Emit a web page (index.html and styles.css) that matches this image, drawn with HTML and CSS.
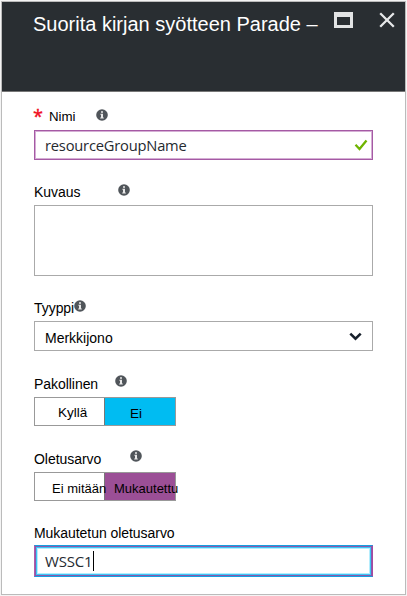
FILE: index.html
```html
<!DOCTYPE html>
<html lang="fi">
<head>
<meta charset="utf-8">
<title>Suorita kirjan syötteen Parade</title>
<link rel="stylesheet" href="styles.css">
</head>
<body>
<svg width="0" height="0" class="defs"><symbol id="info" viewBox="0 0 12 12"><circle cx="6" cy="6" r="5.8" fill="#50555a"/><path d="M5 2.2h2v1.6H5zM4.4 4.8H7v3.8h.8v1H4.2v-1H5V5.8h-.6z" fill="#e8e8e8"/></symbol></svg>
<main class="blade">
  <header class="head">
    <h1 class="title">Suorita kirjan syötteen Parade <span class="dash">–</span></h1>
    <svg class="win" viewBox="0 0 19 16"><path d="M0 0h19v16H0zM3 5v8h13V5z" fill="#e2e4e5" fill-rule="evenodd"/></svg>
    <svg class="close" viewBox="0 0 16 16"><path d="M1.2 1.2l13.6 13.6M14.8 1.2L1.2 14.8" stroke="#e6e8e9" stroke-width="2.3"/></svg>
  </header>
  <form class="form">
    <div class="field name">
      <div class="label"><span class="star">*</span><span class="text">Nimi</span><svg class="info"><use href="#info"/></svg></div>
      <div class="box valid"><span class="value">resourceGroupName</span><svg class="check" viewBox="0 0 14 12"><path d="M1.5 5.8l4 4.2L12.5 1.5" fill="none" stroke="#6fb400" stroke-width="2.3"/></svg></div>
    </div>
    <div class="field desc">
      <div class="label"><span class="text">Kuvaus</span><svg class="info"><use href="#info"/></svg></div>
      <div class="box area"></div>
    </div>
    <div class="field type">
      <div class="label"><span class="text">Tyyppi</span><svg class="info"><use href="#info"/></svg></div>
      <div class="box select"><span class="choice">Merkkijono</span><svg class="chev" viewBox="0 0 13 9"><path d="M1.3 1.6l5.2 5 5.2-5" fill="none" stroke="#17202b" stroke-width="2.6"/></svg></div>
    </div>
    <div class="field req">
      <div class="label"><span class="text">Pakollinen</span><svg class="info"><use href="#info"/></svg></div>
      <div class="toggle"><span class="opt">Kyllä</span><span class="opt blue">Ei</span></div>
    </div>
    <div class="field def">
      <div class="label"><span class="text">Oletusarvo</span><svg class="info"><use href="#info"/></svg></div>
      <div class="toggle"><span class="opt none">Ei mitään</span><span class="opt purple">Mukautettu</span></div>
    </div>
    <div class="field custom">
      <div class="label"><span class="text">Mukautetun oletusarvo</span></div>
      <div class="box focus"><span class="value">WSSC1</span><i class="caret"></i></div>
    </div>
  </form>
</main>
</body>
</html>
```
FILE: styles.css
```css
* { box-sizing: border-box; }
body { margin: 0; background: #f4f4f4; font: 14px/16px "Liberation Sans", Arial, sans-serif; color: #000; }
.defs { display: block; }
.blade { width: 405px; height: 594px; margin: 1px; border: 1px solid #bbb; background: #fff; }
.head { display: flex; height: 90px; padding: 9px 10px 0 31px; background: #292e32; border-bottom: 1px solid #777; }
.title { width: 301px; margin: 0; font: 20px/26px "Liberation Sans", Arial, sans-serif; color: #fff; white-space: nowrap; }
.win { width: 19px; height: 16px; margin-top: 1px; }
.close { width: 16px; height: 16px; margin: 1px 0 0 auto; }
.form { padding: 14px 0 0 32px; }
.field { width: 339px; }
.label { display: flex; height: 24px; padding-top: 3px; white-space: nowrap; }
.text { flex: none; letter-spacing: -0.05px; }
.info { flex: none; width: 12px; height: 12px; }
.star { flex: none; width: 16px; margin: -4px 0 0 -1px; font: 18px/22px "Open Sans", sans-serif; color: #f00d1e; -webkit-text-stroke: 0.4px #f00d1e; }
.name .text { width: 47px; font-size: 13.3px; line-height: 15px; }
.desc .text { width: 84px; }
.type .text { width: 40px; }
.req .text { width: 81px; }
.def .text { width: 96px; }
.req .info, .def .info { margin-top: -1px; }
.desc { margin-top: 21px; }
.type { margin-top: 21px; }
.req { margin-top: 22px; }
.def { margin-top: 22px; }
.custom { margin-top: 20px; }
.custom .label { padding-top: 4px; }
.box { display: flex; align-items: center; height: 30px; padding: 0 10px; border: 1px solid #aaa; }
.value { font: 14.7px/20px "Open Sans", "Noto Sans", sans-serif; letter-spacing: -0.2px; color: #252a30; }
.valid { border: 1px solid #a55aa4; box-shadow: inset 0 0 0 1px #d5aed5; padding: 0 4px 0 10px; }
.check { width: 14px; height: 12px; margin-left: auto; }
.area { height: 71px; }
.choice { padding-top: 3px; }
.chev { width: 13px; height: 9px; margin-left: auto; }
.toggle { display: flex; width: 142px; height: 29px; border: 1px solid #999; white-space: nowrap; font-size: 13.5px; }
.opt { flex: none; width: 69px; padding: 7px 0 0 23px; }
.blue { width: 71px; background: #00bcf2; border-left: 1px solid #777; padding: 8px 0 0 25px; }
.none { position: relative; z-index: 1; padding: 8px 0 0 17px; font-size: 13px; }
.purple { width: 71px; background: #9b4f96; border-left: 1px solid #777; padding: 8px 0 0 9px; font-size: 13px; }
.focus { height: 32px; padding: 0 10px; border: 1px solid #169ee0; border-left-color: #b35aa8; border-right-color: #a64a9f; box-shadow: inset 0 0 0 1px #8b58ab, inset 0 0 0 2px #3cc5f5, inset 0 0 0 3px #b5edfd; }
.focus .value { font-size: 15px; }
.caret { width: 1px; height: 20px; margin-left: 1px; background: #000; }
```
